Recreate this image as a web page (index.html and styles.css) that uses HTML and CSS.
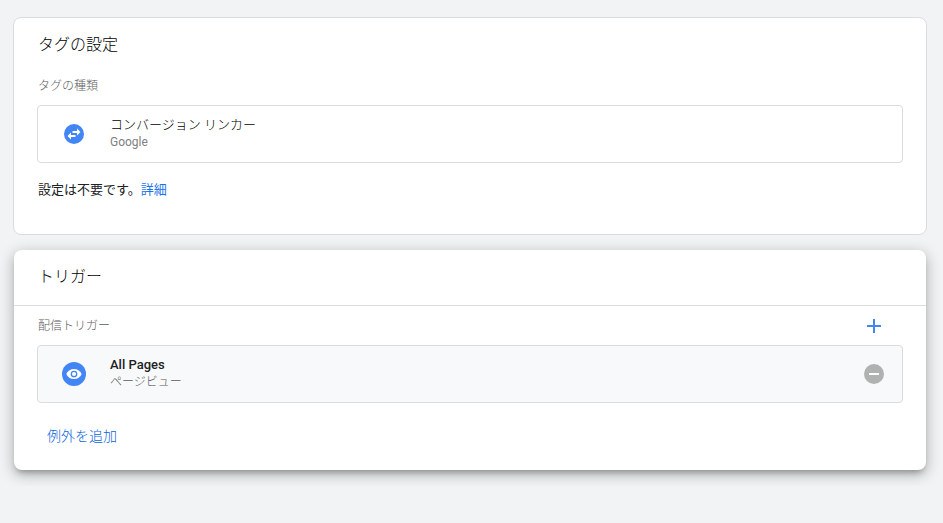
FILE: index.html
```html
<!DOCTYPE html>
<html lang="ja">
<head>
    <meta charset="UTF-8">
    <title>タグの設定</title>
    <link rel="stylesheet" href="styles.css">
</head>
<body>
    <main class="tag-editor">
        <section class="card">
            <h2 class="card-title">タグの設定</h2>
            <div class="card-content">
                <div class="field-row">
                    <h3 class="field-label">タグの種類</h3>
                </div>
                <div class="item">
                    <div class="item-icon">
                        <svg width="20" height="20" viewBox="0 0 20 20">
                            <circle cx="10" cy="10" r="10" fill="#4285f4"/>
                            <path d="M13 4.500 16.500 8 13 11.500V9H8.500V7H13zM7 8.500V11h4.500v2H7v2.500L3.500 12z" fill="#fff"/>
                        </svg>
                    </div>
                    <div class="item-text">
                        <div class="item-name">コンバージョン リンカー</div>
                        <div class="item-type item-vendor">Google</div>
                    </div>
                </div>
                <p class="note">設定は不要です。<a href="#">詳細</a></p>
            </div>
        </section>

        <section class="card card-active">
            <h2 class="card-title">トリガー</h2>
            <div class="card-content">
                <div class="field-row">
                    <h3 class="field-label">配信トリガー</h3>
                    <button type="button" class="icon-btn" aria-label="トリガーを追加">
                        <svg width="14" height="14" viewBox="0 0 14 14">
                            <path d="M6 0h2v6h6v2H8v6H6V8H0V6h6z" fill="#4285f4"/>
                        </svg>
                    </button>
                </div>
                <div class="item item-trigger">
                    <div class="item-icon">
                        <svg width="24" height="24" viewBox="0 0 24 24">
                            <circle cx="12" cy="12" r="12" fill="#4285f4"/>
                            <path d="M12 7C8.500 7 5.500 9 4.300 12c1.200 3 4.200 5 7.700 5s6.500-2 7.700-5C18.500 9 15.500 7 12 7z" fill="#fff"/>
                            <circle cx="12" cy="12" r="2.700" fill="#fff" stroke="#4285f4" stroke-width="1.300"/>
                        </svg>
                    </div>
                    <div class="item-text">
                        <div class="item-name">All Pages</div>
                        <div class="item-type">ページビュー</div>
                    </div>
                    <button type="button" class="icon-btn" aria-label="トリガーを削除">
                        <svg width="20" height="20" viewBox="0 0 20 20">
                            <circle cx="10" cy="10" r="10" fill="#b0b1b1"/>
                            <path d="M5 9h10v2H5z" fill="#fff"/>
                        </svg>
                    </button>
                </div>
                <button type="button" class="text-btn">例外を追加</button>
            </div>
        </section>
    </main>
</body>
</html>
```
FILE: styles.css
```css
:root {
    --link-color: #1a73e8;
    --text-color: #000;
    --label-color: #5c5c5c;
    --border-color: #dadce0;
    --background-color: #f1f3f4;
}

* {
    margin: 0;
    padding: 0;
    box-sizing: border-box;
}

body {
    font-family: Roboto, "Noto Sans CJK JP", sans-serif;
    font-size: 13px;
    font-weight: 300;
    background-color: var(--background-color);
    color: var(--text-color);
}

button {
    border: none;
    background: none;
    font: inherit;
    cursor: pointer;
}

svg {
    display: block;
}

.tag-editor {
    display: flex;
    flex-direction: column;
    gap: 15px;
    padding: 17px 16px 16px 13px;
}

.card {
    background-color: #fff;
    border: 1px solid var(--border-color);
    border-radius: 8px;
}

.card-active {
    margin: 0 1px;
    border: none;
    box-shadow: 0 5px 6px -3px rgba(0, 0, 0, 0.3), 0 4px 14px 2px rgba(0, 0, 0, 0.22);
}

.card-title {
    padding: 17px 24px 15px;
    font-size: 16px;
    font-weight: 300;
    line-height: 20px;
}

.card-active .card-title {
    padding-bottom: 18px;
    border-bottom: 1px solid var(--border-color);
}

.card-content {
    padding: 0 23px 34px;
}

.card-active .card-content {
    padding: 4px 23px 24px;
}

.field-row {
    display: flex;
    align-items: center;
    justify-content: space-between;
    height: 35px;
    padding: 0 22px 3px 1px;
}

.field-label {
    font-size: 12px;
    font-weight: 300;
    line-height: 16px;
    color: var(--label-color);
}

.item {
    display: flex;
    align-items: center;
    height: 58px;
    padding: 0 18px 0 24px;
    border: 1px solid var(--border-color);
    border-radius: 4px;
}

.item-trigger {
    background-color: #f8f9fa;
}

.item-icon {
    display: flex;
    justify-content: center;
    width: 24px;
}

.item-text {
    flex: 1;
    padding: 0 24px 2px;
}

.item-name {
    line-height: 18px;
}

.item-trigger .item-name {
    font-weight: 500;
    color: #202124;
}

.item-type {
    font-size: 12px;
    line-height: 16px;
    color: var(--label-color);
}

.item-vendor {
    font-weight: 400;
    color: #808080;
}

.note {
    padding: 17px 1px 0;
    font-weight: 400;
    line-height: 20px;
    color: #202124;
}

.note a {
    color: var(--link-color);
    text-decoration: none;
}

.text-btn {
    display: block;
    margin-top: 23px;
    padding: 0 10px;
    font-size: 14px;
    line-height: 20px;
    color: #0b63dc;
}
```
